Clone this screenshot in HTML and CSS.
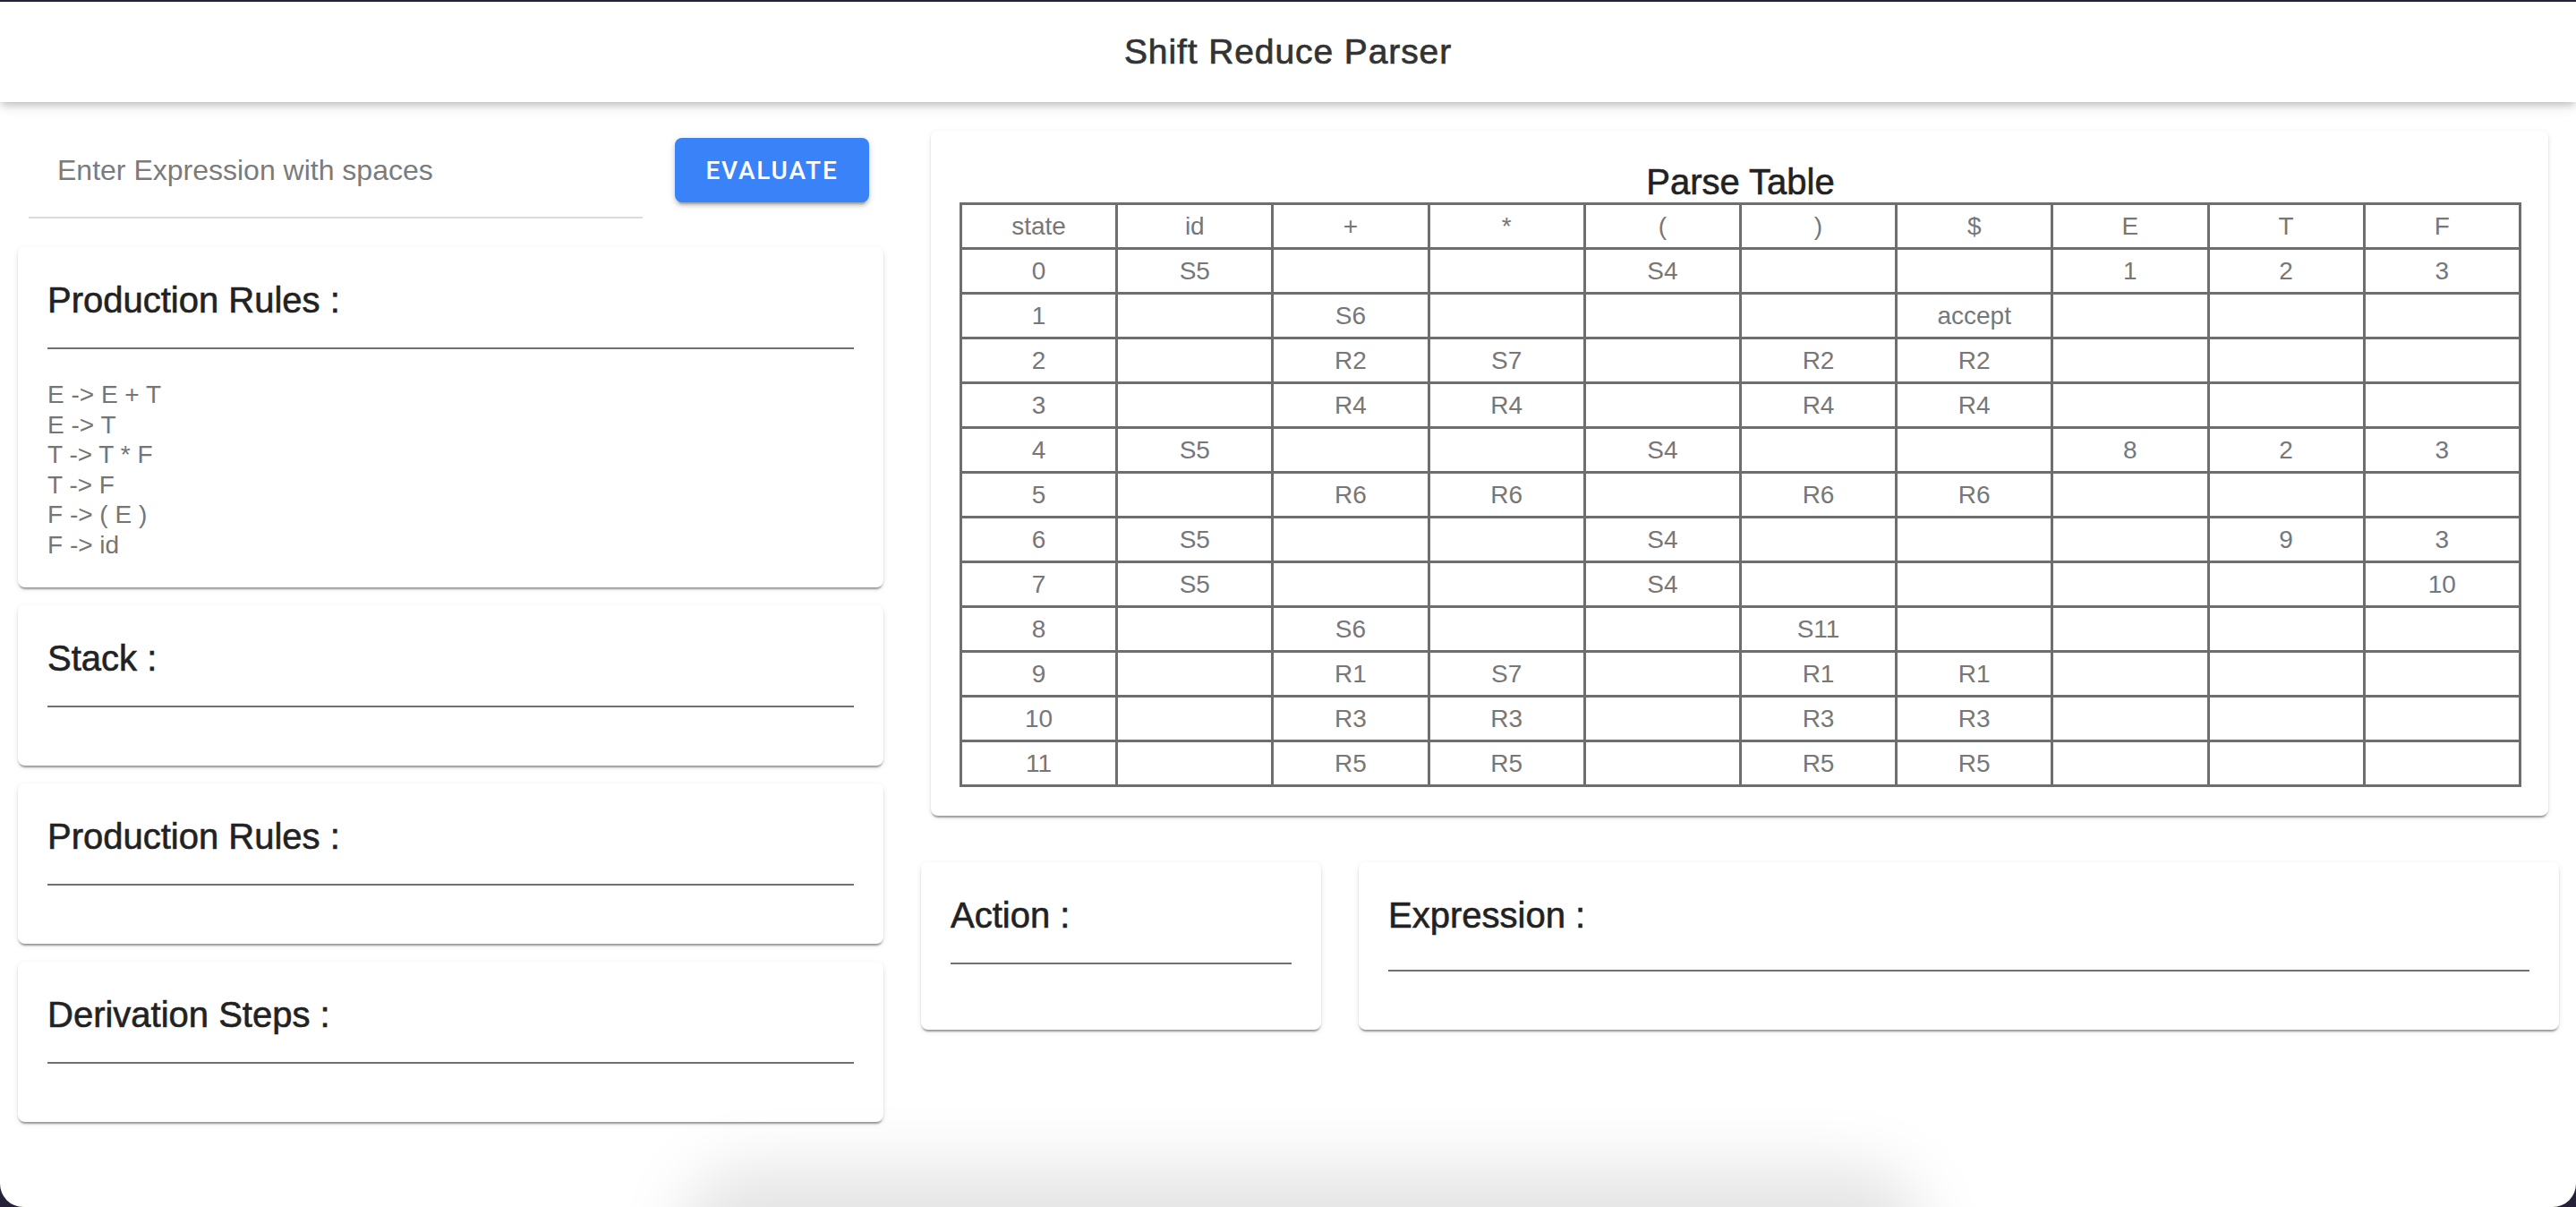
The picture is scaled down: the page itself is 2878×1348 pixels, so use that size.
FILE: index.html
```html
<!DOCTYPE html>
<html lang="en">
<head>
<meta charset="utf-8">
<title>Shift Reduce Parser</title>
<link rel="stylesheet" href="styles.css">
</head>
<body>
<div class="window">
  <header class="appbar">
    <h1 class="appbar-title">Shift Reduce Parser</h1>
  </header>
  <main class="main">
    <section class="left-col">
      <div class="input-row">
        <div class="field">
          <input class="field-input" type="text" placeholder="Enter Expression with spaces">
        </div>
        <button class="btn" type="button">Evaluate</button>
      </div>
      <div class="card">
        <h2 class="card-title">Production Rules :</h2>
        <div class="divider"></div>
        <div class="card-body rules">
          <div>E -&gt; E + T</div>
          <div>E -&gt; T</div>
          <div>T -&gt; T * F</div>
          <div>T -&gt; F</div>
          <div>F -&gt; ( E )</div>
          <div>F -&gt; id</div>
        </div>
      </div>
      <div class="card">
        <h2 class="card-title">Stack :</h2>
        <div class="divider"></div>
        <div class="card-body"></div>
      </div>
      <div class="card">
        <h2 class="card-title">Production Rules :</h2>
        <div class="divider"></div>
        <div class="card-body"></div>
      </div>
      <div class="card">
        <h2 class="card-title">Derivation Steps :</h2>
        <div class="divider"></div>
        <div class="card-body"></div>
      </div>
    </section>
    <section class="right-col">
      <div class="card table-card">
        <h2 class="table-title">Parse Table</h2>
        <table class="parse-table">
          <thead>
            <tr><td>state</td><td>id</td><td>+</td><td>*</td><td>(</td><td>)</td><td>$</td><td>E</td><td>T</td><td>F</td></tr>
          </thead>
          <tbody>
            <tr><td>0</td><td>S5</td><td></td><td></td><td>S4</td><td></td><td></td><td>1</td><td>2</td><td>3</td></tr>
            <tr><td>1</td><td></td><td>S6</td><td></td><td></td><td></td><td>accept</td><td></td><td></td><td></td></tr>
            <tr><td>2</td><td></td><td>R2</td><td>S7</td><td></td><td>R2</td><td>R2</td><td></td><td></td><td></td></tr>
            <tr><td>3</td><td></td><td>R4</td><td>R4</td><td></td><td>R4</td><td>R4</td><td></td><td></td><td></td></tr>
            <tr><td>4</td><td>S5</td><td></td><td></td><td>S4</td><td></td><td></td><td>8</td><td>2</td><td>3</td></tr>
            <tr><td>5</td><td></td><td>R6</td><td>R6</td><td></td><td>R6</td><td>R6</td><td></td><td></td><td></td></tr>
            <tr><td>6</td><td>S5</td><td></td><td></td><td>S4</td><td></td><td></td><td></td><td>9</td><td>3</td></tr>
            <tr><td>7</td><td>S5</td><td></td><td></td><td>S4</td><td></td><td></td><td></td><td></td><td>10</td></tr>
            <tr><td>8</td><td></td><td>S6</td><td></td><td></td><td>S11</td><td></td><td></td><td></td><td></td></tr>
            <tr><td>9</td><td></td><td>R1</td><td>S7</td><td></td><td>R1</td><td>R1</td><td></td><td></td><td></td></tr>
            <tr><td>10</td><td></td><td>R3</td><td>R3</td><td></td><td>R3</td><td>R3</td><td></td><td></td><td></td></tr>
            <tr><td>11</td><td></td><td>R5</td><td>R5</td><td></td><td>R5</td><td>R5</td><td></td><td></td><td></td></tr>
          </tbody>
        </table>
      </div>
      <div class="bottom-row">
        <div class="card">
          <h2 class="card-title">Action :</h2>
          <div class="divider"></div>
          <div class="card-body"></div>
        </div>
        <div class="card">
          <h2 class="card-title">Expression :</h2>
          <div class="divider divider-wide"></div>
          <div class="card-body"></div>
        </div>
      </div>
    </section>
  </main>
  <div class="dock-shadow"></div>
</div>
</body>
</html>
```

FILE: styles.css
```css
* {
  box-sizing: border-box;
}

html, body {
  margin: 0;
  padding: 0;
}

body {
  background: #262039;
  font-family: "Liberation Sans", Arial, Helvetica, sans-serif;
  width: 2878px;
  height: 1348px;
  overflow: hidden;
}

.window {
  position: relative;
  margin-top: 2px;
  height: 1346px;
  background: #ffffff;
  border-radius: 0 0 26px 26px;
  overflow: hidden;
}

.appbar {
  position: relative;
  z-index: 2;
  height: 112px;
  display: flex;
  align-items: center;
  justify-content: center;
  background: #ffffff;
  box-shadow: 0 4px 8px -2px rgba(0, 0, 0, 0.2), 0 8px 10px 0 rgba(0, 0, 0, 0.06), 0 2px 20px 0 rgba(0, 0, 0, 0.05);
}

.appbar-title {
  margin: 0;
  font-size: 39px;
  line-height: 46px;
  font-weight: 400;
  letter-spacing: 0.9px;
  color: #333333;
  -webkit-text-stroke: 0.7px #333333;
}

.main {
  display: flex;
  align-items: flex-start;
  gap: 41px;
  padding: 32px 19px 0 20px;
}

.left-col {
  width: 967px;
  flex: none;
  display: flex;
  flex-direction: column;
  gap: 20px;
}

.right-col {
  flex: 1;
  display: flex;
  flex-direction: column;
}

.input-row {
  display: flex;
  align-items: flex-start;
  margin-top: 8px;
  margin-bottom: 12px;
}

.field {
  width: 686px;
  margin-left: 12px;
  margin-top: 6px;
  padding-bottom: 22px;
  border-bottom: 2px solid #dadada;
}

.field-input {
  display: block;
  width: 100%;
  height: 60px;
  border: none;
  outline: none;
  padding: 0 0 0 32px;
  margin: 0;
  font-family: "Liberation Sans", Arial, sans-serif;
  font-size: 32px;
  color: #333;
  background: transparent;
}

.field-input::placeholder {
  color: #7b7b7b;
  opacity: 1;
}

.btn {
  margin-left: 36px;
  width: 217px;
  height: 72px;
  border: none;
  border-radius: 8px;
  background: #3a82f7;
  color: #ffffff;
  font-family: Roboto, "Liberation Sans", sans-serif;
  font-weight: 500;
  font-size: 28px;
  letter-spacing: 1.8px;
  text-transform: uppercase;
  box-shadow: 0 6px 2px -4px rgba(0, 0, 0, 0.2), 0 4px 4px 0 rgba(0, 0, 0, 0.14), 0 2px 10px 0 rgba(0, 0, 0, 0.12);
  padding: 0;
}

.card {
  background: #ffffff;
  border-radius: 8px;
  padding: 36px 33px 31px;
  box-shadow: 0 4px 2px -2px rgba(0, 0, 0, 0.25), 0 2px 2px 0 rgba(0, 0, 0, 0.14), 0 2px 6px 0 rgba(0, 0, 0, 0.1);
}

.card-title {
  margin: 0;
  font-size: 40px;
  line-height: 46px;
  font-weight: 400;
  color: #222222;
  -webkit-text-stroke: 0.6px #222222;
}

.divider {
  margin-top: 30px;
  height: 2px;
  background: #707070;
}

.divider-wide {
  margin-top: 38px;
}

.card-body {
  margin-top: 34px;
}

.rules {
  font-size: 28px;
  line-height: 33.5px;
  color: #757575;
}

.table-card {
  margin: 0 12px;
  padding: 34px 30px 32px 32px;
}

.table-title {
  margin: 0;
  text-align: center;
  font-size: 40px;
  line-height: 46px;
  font-weight: 400;
  color: #222222;
  -webkit-text-stroke: 0.6px #222222;
}

.parse-table {
  width: 100%;
  table-layout: fixed;
  border-collapse: separate;
  border-spacing: 0;
  border-top: 3px solid #6e6e6e;
  border-left: 3px solid #6e6e6e;
}

.parse-table td {
  height: 50px;
  padding: 0;
  line-height: 47px;
  text-align: center;
  font-size: 28px;
  color: #777777;
  border-right: 3px solid #6e6e6e;
  border-bottom: 3px solid #6e6e6e;
}

.bottom-row {
  margin-top: 52px;
  display: grid;
  grid-template-columns: 447px 1fr;
  gap: 42px;
  margin-left: 1px;
}

.dock-shadow {
  position: absolute;
  left: 760px;
  top: 1300px;
  width: 1390px;
  height: 170px;
  border-radius: 80px;
  background: rgba(0, 0, 0, 0.1);
  filter: blur(34px);
  pointer-events: none;
}
```
